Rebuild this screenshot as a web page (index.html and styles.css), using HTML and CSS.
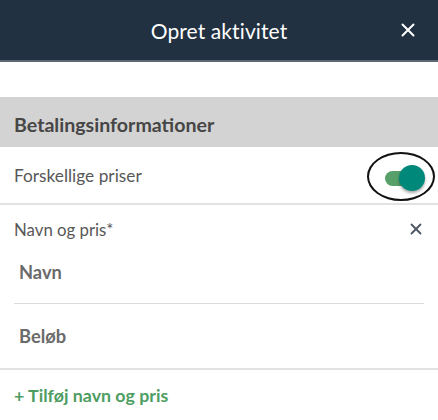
FILE: index.html
```html
<!DOCTYPE html>
<html lang="da">
<head>
<meta charset="utf-8">
<link rel="stylesheet" href="styles.css">
</head>
<body>
<div class="app">
  <header class="topbar">
    <div class="title">Opret aktivitet</div>
    <span class="close">
      <svg width="14" height="14" viewBox="0 0 14 14"><path d="M1.5 1.5L12.5 12.5M12.5 1.5L1.5 12.5" stroke="#ffffff" stroke-width="2" stroke-linecap="round"/></svg>
    </span>
  </header>
  <div class="spacer"></div>
  <div class="section-head">Betalingsinformationer</div>
  <div class="row toggle-row">
    <span class="label">Forskellige priser</span>
    <span class="toggle-wrap">
      <span class="toggle">
        <span class="track"></span>
        <span class="thumb"></span>
      </span>
    </span>
  </div>
  <div class="group">
    <div class="group-head">
      <span class="label small">Navn og pris*</span>
      <span class="gclose">
        <svg width="12" height="12" viewBox="0 0 12 12"><path d="M1.5 1.5L10.5 10.5M10.5 1.5L1.5 10.5" stroke="#4b5561" stroke-width="1.8" stroke-linecap="round"/></svg>
      </span>
    </div>
    <div class="field first">Navn</div>
    <div class="field last">Beløb</div>
  </div>
  <div class="add">+ Tilføj navn og pris</div>
</div>
</body>
</html>
```
FILE: styles.css
```css
html, body {
  margin: 0;
  padding: 0;
  background: #ffffff;
}
body {
  font-family: Lato, "Open Sans", sans-serif;
  width: 438px;
  overflow: hidden;
}
.topbar {
  height: 60px;
  background: #213141;
  border-bottom: 2px solid #5b6874;
  display: flex;
  align-items: center;
  justify-content: center;
  position: relative;
}
.title {
  color: #ffffff;
  font-size: 21px;
  letter-spacing: 0.1px;
}
.close {
  position: absolute;
  right: 23px;
  top: 23px;
  display: flex;
}
.spacer {
  height: 35px;
}
.section-head {
  height: 46px;
  padding-top: 4px;
  background: #d3d3d3;
  display: flex;
  align-items: center;
  padding-left: 14px;
  font-weight: bold;
  font-size: 19.6px;
  color: #464646;
}
.row {
  display: flex;
  align-items: center;
  justify-content: space-between;
  padding-left: 14px;
}
.toggle-row {
  height: 56px;
  border-bottom: 2px solid #e2e2e2;
}
.label {
  font-size: 17.3px;
  color: #585858;
}
.label.small {
  font-size: 16.8px;
}
.toggle-wrap {
  width: 64px;
  height: 45px;
  border: 2px solid #111111;
  border-radius: 50%;
  margin-right: 3px;
  margin-top: 3px;
  display: flex;
  align-items: center;
  justify-content: center;
}
.toggle {
  position: relative;
  width: 40px;
  height: 26px;
  margin-left: 8px;
  margin-top: 3px;
}
.track {
  position: absolute;
  left: 0;
  top: 6px;
  width: 36px;
  height: 15px;
  border-radius: 8px;
  background: #58a06a;
}
.thumb {
  position: absolute;
  right: 0;
  top: 0;
  width: 26px;
  height: 26px;
  border-radius: 50%;
  background: #00897b;
  box-shadow: 0 2px 3px rgba(0,0,0,0.35);
}
.group {
  padding: 0 14px;
  border-bottom: 2px solid #e2e2e2;
}
.group-head {
  height: 48px;
  display: flex;
  align-items: center;
  justify-content: space-between;
}
.gclose {
  display: flex;
  margin-right: 2px;
}
.field {
  padding-left: 5px;
  display: flex;
  align-items: center;
  font-weight: bold;
  font-size: 18.3px;
  color: #6a6a6a;
}
.field.first {
  height: 38px;
  padding-bottom: 12px;
  border-bottom: 1px solid #dcdcdc;
}
.field.last {
  height: 64px;
}
.add {
  padding: 0 14px;
  height: 50px;
  display: flex;
  align-items: center;
  color: #4e9d62;
  font-weight: bold;
  font-size: 17.8px;
}
```
